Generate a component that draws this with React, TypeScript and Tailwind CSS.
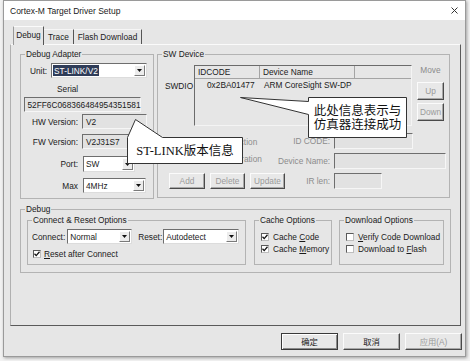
import React from "react"

type Kids = { className?: string; children?: React.ReactNode }

const Group = ({ title, className, children }: Kids & { title: string }) => (
    <fieldset className={`min-w-0 shrink-0 border border-[#b3b3b3] ${className}`}>
        <legend className="ml-[4px] px-[1px] h-[10px] leading-[10px]">{title}</legend>
        {children}
    </fieldset>
)

const Field = ({ className, children }: Kids) => (
    <div className={`flex items-center pl-[3px] bg-[#e2e2e2] border border-t-[#6e6e6e] border-l-[#6e6e6e] border-r-[#f6f6f6] border-b-[#f6f6f6] ${className}`}>
        {children}
    </div>
)

const Combo = ({ className, text, selected }: { className: string; text: string; selected?: boolean }) => (
    <div className={`flex bg-white border border-t-[#6e6e6e] border-l-[#6e6e6e] border-r-[#dcdcdc] border-b-[#dcdcdc] ${className}`}>
        <div className="flex-1 flex items-stretch py-[1px] pl-[1px]">
            <span className={selected ? "flex items-center px-[1px] bg-[#2f3c58] text-white" : "flex items-center pl-[1px]"}>{text}</span>
        </div>
        <div className="w-[11px] m-[1px] flex items-center justify-center bg-[#ececec] border border-t-white border-l-white border-r-[#7a7a7a] border-b-[#7a7a7a]">
            <svg width="5" height="3" viewBox="0 0 5 3"><path d="M0 0h5L2.5 3z" fill="#111" /></svg>
        </div>
    </div>
)

const Btn = ({ className, children, disabled, primary }: Kids & { disabled?: boolean; primary?: boolean }) => (
    <div
        className={`flex items-center justify-center bg-[#e8e8e8] border ${primary
            ? "border-[#3a3a3a] shadow-[inset_1px_1px_0_#fff,inset_-1px_-1px_0_#8a8a8a]"
            : "border-t-[#fbfbfb] border-l-[#fbfbfb] border-r-[#4a4a4a] border-b-[#4a4a4a] shadow-[inset_-1px_-1px_0_#a8a8a8]"} ${disabled ? "text-[#9a9a9a]" : ""} ${className}`}
    >
        {children}
    </div>
)

const Check = ({ checked }: { checked?: boolean }) => (
    <div className="w-[8px] h-[8px] flex items-center justify-center bg-white border border-t-[#5a5a5a] border-l-[#5a5a5a] border-r-[#bdbdbd] border-b-[#bdbdbd]">
        {checked && (
            <svg width="6" height="6" viewBox="0 0 6 6"><path d="M0.5 2.8L2.2 4.6L5.5 0.8" stroke="#111" strokeWidth="1.3" fill="none" /></svg>
        )}
    </div>
)

// radio rows sit mostly under the ST-LINK callout, like in the screenshot
const Radio = ({ label }: { label: string }) => (
    <div className="flex items-center h-[10px] pl-[14px] text-[#8c8c8c]">
        <div className="w-[8px] h-[8px] rounded-full bg-[#eeeeee] border border-[#8a8a8a]" />
        <span className="ml-[3px] whitespace-nowrap">{label}</span>
    </div>
)

const DebugAdapter = () => (
    <Group title="Debug Adapter" className="w-[134px] h-[150px]">
        <div className="mt-[4px] flex items-center h-[15px]">
            <span className="w-[26px] text-right">Unit:</span>
            <Combo className="ml-[4px] w-[96px] h-[15px]" text="ST-LINK/V2" selected />
        </div>
        <div className="mt-[6px] h-[10px] pl-[36px]">Serial</div>
        <Field className="mt-[3px] ml-[3px] w-[117px] h-[15px] justify-center">52FF6C068366484954351581</Field>
        <div className="mt-[2px] flex items-center h-[15px]">
            <span className="w-[57px] text-right">HW Version:</span>
            <Field className="ml-[4px] w-[65px] h-[15px]">V2</Field>
        </div>
        <div className="mt-[5px] flex items-center h-[15px]">
            <span className="w-[57px] text-right">FW Version:</span>
            <Field className="ml-[4px] w-[65px] h-[15px]">V2J31S7</Field>
        </div>
        <div className="mt-[7px] flex items-center h-[16px]">
            <span className="w-[57px] text-right">Port:</span>
            <Combo className="ml-[5px] w-[52px] h-[16px]" text="SW" />
        </div>
        <div className="mt-[6px] flex items-center h-[15px]">
            <span className="w-[57px] text-right">Max</span>
            <Combo className="ml-[5px] w-[63px] h-[15px]" text="4MHz" />
        </div>
    </Group>
)

const SwDevice = () => (
    <Group title="SW Device" className="w-[293px] h-[149px]">
        <div className="mt-[6px] flex">
            <div className="w-[36px] pl-[7px] pt-[16px]">SWDIO</div>
            <div className="w-[218px] h-[61px] flex flex-col bg-[#e6e6e6] border border-t-[#6b6b6b] border-l-[#6b6b6b] border-r-[#f4f4f4] border-b-[#f4f4f4]">
                <div className="flex h-[13px] border-b border-[#a4a4a4]">
                    <div className="w-[65px] pl-[3px] flex items-center border-r border-[#a4a4a4]">IDCODE</div>
                    <div className="w-[95px] pl-[3px] flex items-center border-r border-[#a4a4a4]">Device Name</div>
                    <div className="flex-1" />
                </div>
                <div className="flex h-[12px] items-center">
                    <div className="w-[65px] pl-[12px]">0x2BA01477</div>
                    <div className="pl-[4px] whitespace-nowrap">ARM CoreSight SW-DP</div>
                </div>
            </div>
            <div className="ml-[5px] w-[27px] flex flex-col items-center text-[#8c8c8c]">
                <div className="h-[10px]">Move</div>
                <Btn className="mt-[7px] w-[27px] h-[18px]" disabled>Up</Btn>
                <Btn className="mt-[3px] w-[27px] h-[18px]" disabled>Down</Btn>
            </div>
        </div>
        <div className="mt-[7px] flex">
            <div className="w-[120px] shrink-0">
                <div className="mt-[4px]"><Radio label="Automatic Detection" /></div>
                <div className="mt-[7px]"><Radio label="Manual Configuration" /></div>
                <div className="mt-[9px] flex pl-[11px] gap-[5px]">
                    <Btn className="w-[36px] h-[16px] shrink-0" disabled>Add</Btn>
                    <Btn className="w-[35px] h-[16px] shrink-0" disabled>Delete</Btn>
                    <Btn className="w-[35px] h-[16px] shrink-0" disabled>Update</Btn>
                </div>
            </div>
            <div className="ml-auto mr-[3px] grid grid-cols-[max-content_112px] gap-x-[4px] gap-y-[3px] items-center text-[#8c8c8c]">
                <span className="justify-self-end">ID CODE:</span>
                <Field className="w-[79px] h-[16px]" />
                <span className="justify-self-end">Device Name:</span>
                <Field className="w-[112px] h-[16px]" />
                <span className="justify-self-end">IR len:</span>
                <Field className="w-[48px] h-[16px]" />
            </div>
        </div>
    </Group>
)

const DebugGroup = () => (
    <Group title="Debug" className="mt-[5px] w-[431px] h-[69px]">
        <div className="mt-[1px] flex pl-[6px]">
            <Group title="Connect & Reset Options" className="w-[219px] h-[50px]">
                <div className="mt-[4px] flex items-center h-[15px] pl-[4px]">
                    <span>Connect:</span>
                    <Combo className="ml-[2px] w-[65px] h-[15px]" text="Normal" />
                    <span className="ml-[6px]">Reset:</span>
                    <Combo className="ml-[1px] w-[76px] h-[15px]" text="Autodetect" />
                </div>
                <div className="mt-[5px] flex items-center h-[10px] pl-[5px]">
                    <Check checked />
                    <span className="ml-[3px]"><span className="underline">R</span>eset after Connect</span>
                </div>
            </Group>
            <Group title="Cache Options" className="ml-[8px] w-[78px] h-[50px]">
                <div className="mt-[6px] flex items-center h-[12px] pl-[6px]">
                    <Check checked />
                    <span className="ml-[4px] whitespace-nowrap">Cache <span className="underline">C</span>ode</span>
                </div>
                <div className="flex items-center h-[12px] pl-[6px]">
                    <Check checked />
                    <span className="ml-[4px] whitespace-nowrap">Cache <span className="underline">M</span>emory</span>
                </div>
            </Group>
            <Group title="Download Options" className="ml-[7px] w-[105px] h-[50px]">
                <div className="mt-[6px] pr-[2px] overflow-hidden">
                    <div className="flex items-center h-[12px] pl-[6px]">
                        <Check />
                        <span className="ml-[4px] whitespace-nowrap"><span className="underline">V</span>erify Code Download</span>
                    </div>
                    <div className="flex items-center h-[12px] pl-[6px]">
                        <Check />
                        <span className="ml-[4px] whitespace-nowrap">Download to <span className="underline">F</span>lash</span>
                    </div>
                </div>
            </Group>
        </div>
    </Group>
)

export default function App() {
    return (
        <div className="relative w-[470px] h-[361px] overflow-hidden bg-[#f2f2f2] text-[#1a1a1a] text-[8.3px] leading-[10px] font-['Liberation_Sans','Noto_Sans_CJK_SC',sans-serif]">
            <div className="ml-[3px] w-[463px] h-[357px] flex flex-col bg-[#e6e6e6] border border-[#9a9a9a] shadow-[1px_1px_3px_rgba(0,0,0,0.35)]">
                <div className="h-[19px] shrink-0 flex items-center justify-between pl-[6px] pr-[7px] bg-white">
                    <span className="text-[8.5px]">Cortex-M Target Driver Setup</span>
                    <svg width="7" height="7" viewBox="0 0 7 7"><path d="M0.5 0.5L6.5 6.5M6.5 0.5L0.5 6.5" stroke="#333" strokeWidth="1" /></svg>
                </div>

                <div className="h-[24px] shrink-0 flex items-end pl-[9px]">
                    <div className="relative z-10 -mb-[1px] w-[31px] h-[19px] pt-[3px] flex justify-center bg-[#e6e6e6] border border-b-0 border-t-[#fafafa] border-l-[#9a9a9a] border-r-[#555]">Debug</div>
                    <div className="h-[15px] w-[30px] flex items-center justify-center border-t border-r border-t-[#f6f6f6] border-r-[#555]">Trace</div>
                    <div className="h-[15px] w-[68px] flex items-center justify-center border-t border-r border-t-[#f6f6f6] border-r-[#555]">Flash Download</div>
                </div>

                <div className="ml-[6px] w-[451px] h-[282px] shrink-0 pl-[9px] pt-[4px] border border-t-[#fafafa] border-l-[#b0b0b0] border-r-[#5a5a5a] border-b-[#5a5a5a]">
                    <div className="flex gap-[3px]">
                        <DebugAdapter />
                        <SwDevice />
                    </div>
                    <DebugGroup />
                </div>

                <div className="mt-[7px] flex justify-end pr-[3px] gap-[5px]">
                    <Btn className="w-[57px] h-[17px]" primary>确定</Btn>
                    <Btn className="w-[57px] h-[17px]">取消</Btn>
                    <Btn className="w-[57px] h-[17px]" disabled>应用(A)</Btn>
                </div>
            </div>

            <div className="absolute left-[126px] top-[118px] w-[118px] h-[47px]">
                <svg className="absolute inset-0" width="118" height="47" viewBox="0 0 118 47">
                    <path d="M1.5 19.5L9.5 1.5L36.5 19.5L116.5 19.5L116.5 45.5L1.5 45.5Z" fill="#fff" stroke="#333" strokeWidth="1" />
                </svg>
                <div className="absolute left-0 top-[19px] w-[118px] h-[27px] flex items-center justify-center text-[12.5px] leading-[14px] text-[#111] font-['Liberation_Serif','Noto_Sans_CJK_SC',serif]">
                    ST-LINK版本信息
                </div>
            </div>

            <div className="absolute left-[238px] top-[95px] w-[170px] h-[44px]">
                <svg className="absolute inset-0" width="170" height="44" viewBox="0 0 170 44">
                    <path d="M70.5 2.5L168.5 2.5L168.5 42.5L70.5 42.5L70.5 19.5L2.5 2.5L70.5 6.5Z" fill="#fff" stroke="#333" strokeWidth="1" />
                </svg>
                <div className="absolute left-[70px] top-[2px] w-[99px] h-[41px] flex flex-col items-center justify-center text-[12.5px] leading-[14px] text-[#111] font-['Liberation_Serif','Noto_Sans_CJK_SC',serif]">
                    <span>此处信息表示与</span>
                    <span>仿真器连接成功</span>
                </div>
            </div>
        </div>
    )
}
